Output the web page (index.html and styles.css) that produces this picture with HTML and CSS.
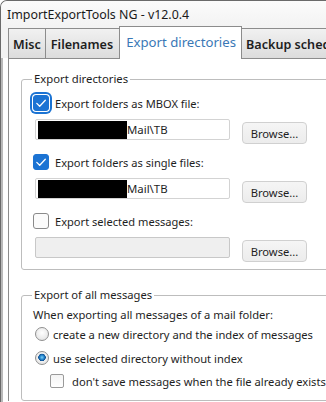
FILE: index.html
```html
<!DOCTYPE html>
<html lang="en">

<head>
    <meta charset="UTF-8">
    <meta name="viewport" content="width=device-width, initial-scale=1.0">
    <title>ImportExportTools NG</title>
    <link rel="stylesheet" href="styles.css">
</head>

<body>
    <div class="window">
        <div class="titlebar">ImportExportTools NG - v12.0.4</div>

        <div class="tabs">
            <div class="tab">Misc</div>
            <div class="tab">Filenames</div>
            <div class="tab selected">Export directories</div>
            <div class="tab">Backup scheduling</div>
        </div>

        <div class="panel">
            <fieldset class="group group-dirs">
                <legend>Export directories</legend>

                <div class="item">
                    <div class="check-row">
                        <span class="check checked focused">
                            <svg width="16" height="16" viewBox="0 0 16 16"><path d="M3.8 8.4 L6.7 11.2 L12.3 5.2" fill="none" stroke="#fff" stroke-width="1.3" stroke-linecap="round" stroke-linejoin="round"/></svg>
                        </span>
                        Export folders as MBOX file:
                    </div>
                    <div class="path-row">
                        <div class="field"><span class="redact"></span>Mail\TB</div>
                        <button class="btn">Browse...</button>
                    </div>
                </div>

                <div class="item">
                    <div class="check-row">
                        <span class="check checked">
                            <svg width="16" height="16" viewBox="0 0 16 16"><path d="M3.8 8.4 L6.7 11.2 L12.3 5.2" fill="none" stroke="#fff" stroke-width="1.3" stroke-linecap="round" stroke-linejoin="round"/></svg>
                        </span>
                        Export folders as single files:
                    </div>
                    <div class="path-row">
                        <div class="field"><span class="redact"></span>Mail\TB</div>
                        <button class="btn">Browse...</button>
                    </div>
                </div>

                <div class="item">
                    <div class="check-row">
                        <span class="check"></span>
                        Export selected messages:
                    </div>
                    <div class="path-row">
                        <div class="field disabled"></div>
                        <button class="btn">Browse...</button>
                    </div>
                </div>
            </fieldset>

            <fieldset class="group group-all">
                <legend>Export of all messages</legend>
                <div class="intro">When exporting all messages of a mail folder:</div>
                <div class="radio-row">
                    <span class="radio"></span>
                    create a new directory and the index of messages
                </div>
                <div class="radio-row second">
                    <span class="radio on"></span>
                    use selected directory without index
                </div>
                <div class="small-check-row">
                    <span class="small-check"></span>
                    don't save messages when the file already exists
                </div>
            </fieldset>
        </div>
    </div>
</body>

</html>
```

FILE: styles.css
```css
* {
    box-sizing: border-box;
}

body {
    margin: 0;
    background-color: #ffffff;
    font-family: "Noto Sans", "Open Sans", sans-serif;
    color: #1e1e1e;
    overflow: hidden;
}

.window {
    width: 380px;
    height: 420px;
    border: 1px solid #6a6a6a;
    border-right: none;
    border-bottom: none;
    border-radius: 7px 0 0 0;
    background-color: #ffffff;
    box-shadow: inset 2px 0 0 #b9b9b9;
}

.titlebar {
    height: 25px;
    padding-left: 6px;
    font-size: 12.4px;
    line-height: 28px;
    color: #1a1a1a;
    background: linear-gradient(#fbfbfb, #f3f3f3);
    border-radius: 6px 0 0 0;
}

.tabs {
    display: flex;
    align-items: flex-end;
    height: 32px;
    padding-left: 7px;
    background-color: #f3f3f3;
}

.tab {
    height: 30px;
    padding: 0 4px;
    margin-left: -1px;
    border: 1px solid #8c8c8c;
    border-bottom: none;
    background: linear-gradient(#f1f1f1, #dcdcdc);
    font-size: 12.6px;
    font-weight: 600;
    line-height: 31px;
    white-space: nowrap;
}

.tab:first-child {
    margin-left: 0;
}

.tab:nth-child(2) {
    padding: 0 6px 0 5px;
}

.tab.selected {
    position: relative;
    height: 33px;
    margin-bottom: -1px;
    padding: 0 5px 0 6px;
    background: #ffffff;
    color: #3a78b6;
    font-size: 13.2px;
    font-weight: 400;
    line-height: 30px;
}

.panel {
    margin-left: 7px;
    padding-left: 12px;
    border-top: 1px solid #8c8c8c;
    border-left: 1px solid #8c8c8c;
    background-color: #ffffff;
}

.group {
    margin: 0;
    border: 1px solid #bdbdbd;
    border-radius: 3px;
    padding: 6px 0 7px 11px;
    font-size: 11.2px;
}

.group legend {
    padding: 0 2px;
    margin-left: -1px;
    line-height: 16px;
    font-size: 11.3px;
}

.group-dirs {
    margin-top: 12px;
}

.group-all {
    margin-top: 17px;
    padding-top: 3px;
    padding-bottom: 10px;
}

.group-all legend {
    font-size: 11.2px;
}

.item + .item {
    margin-top: 8px;
}

.check-row {
    display: flex;
    align-items: center;
    gap: 6px;
    height: 20px;
    font-size: 11.1px;
}

.check {
    display: inline-block;
    width: 16px;
    height: 16px;
    border: 1px solid #8a8a8a;
    border-radius: 3px;
    background-color: #fbfbfb;
}

.check svg {
    display: block;
    margin: -1px;
}

.check.checked {
    border-color: #1b73d3;
    background-color: #1b73d3;
}

.check.focused {
    box-shadow: 0 0 0 1px #ffffff, 0 0 0 3px #1b73d3;
}

.path-row {
    display: flex;
    align-items: flex-start;
    margin-top: 6px;
    height: 25px;
}

.field {
    display: flex;
    align-items: center;
    width: 195px;
    height: 21px;
    margin-left: 2px;
    padding-left: 2px;
    border: 1px solid #d3d3d3;
    border-radius: 2px;
    background-color: #ffffff;
    font-size: 11.4px;
}

.field.disabled {
    background-color: #efefef;
    border-color: #c8c8c8;
}

.redact {
    display: inline-block;
    width: 89px;
    height: 18px;
    background-color: #000000;
}

.btn {
    width: 65px;
    height: 22px;
    margin-top: 3px;
    margin-left: 12px;
    padding: 0;
    border: 1px solid #d0d0d0;
    border-radius: 4px;
    background: linear-gradient(#f5f5f5, #ececec);
    font-family: inherit;
    font-size: 11.2px;
    color: #1e1e1e;
}

.intro {
    line-height: 18px;
}

.radio-row {
    display: flex;
    align-items: center;
    gap: 4px;
    height: 18px;
    margin-top: 1px;
}

.radio-row.second {
    margin-top: 6px;
}

.radio {
    display: inline-block;
    width: 14px;
    height: 14px;
    margin-left: 2px;
    border: 1px solid #8f8f8f;
    border-radius: 50%;
    background: radial-gradient(circle at 50% 40%, #ffffff, #dedede);
}

.radio.on {
    background:
        radial-gradient(circle at 50% 45%, #7fd1f5 0, #2a8ad0 2px, #0d4f92 3.5px, transparent 4px),
        radial-gradient(circle at 50% 40%, #ffffff, #dedede);
}

.small-check-row {
    display: flex;
    align-items: center;
    gap: 8px;
    height: 18px;
    margin-top: 5px;
    padding-left: 17px;
}

.small-check {
    display: inline-block;
    width: 14px;
    height: 14px;
    border: 1px solid #9a9a9a;
    border-radius: 2px;
    background: linear-gradient(#f4f4f4, #ffffff);
}
```
